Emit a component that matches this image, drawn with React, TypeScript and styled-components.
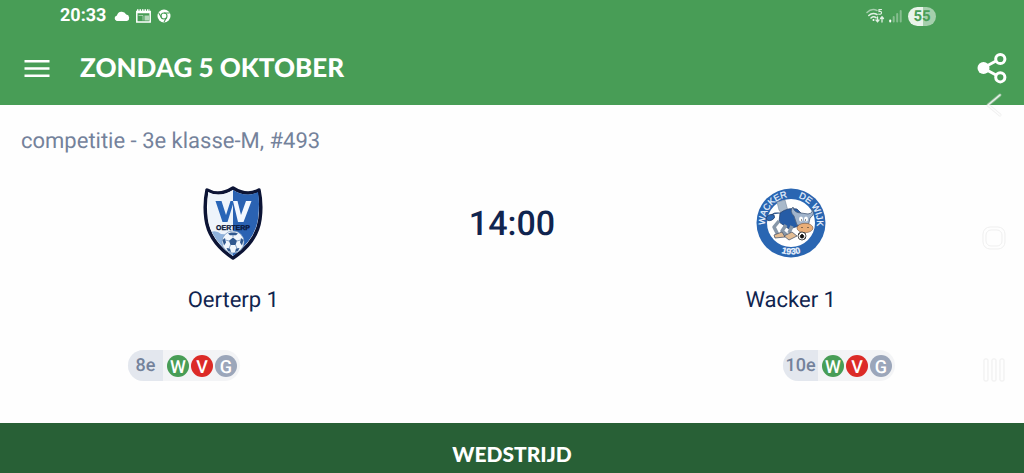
import React from "react";
import styled, { createGlobalStyle } from "styled-components";

const GlobalStyle = createGlobalStyle`
  *, *::before, *::after { box-sizing: border-box; }
  body {
    margin: 0;
    background: #fefefe;
    color: #10244f;
    font-family: Roboto, "Liberation Sans", sans-serif;
    text-rendering: geometricPrecision;
  }
`;

const Page = styled.div`
  min-height: 100vh;
  display: flex;
  flex-direction: column;
`;

const Top = styled.header`
  background: #489d56;
  color: #fff;
`;

const StatusBar = styled.div`
  display: flex;
  align-items: center;
  justify-content: space-between;
  height: 32px;
  padding: 0 88px 0 60px;
`;

const StatusGroup = styled.div<{ $gap: number }>`
  display: flex;
  align-items: center;
  gap: ${(p) => p.$gap}px;
`;

const Clock = styled.span`
  margin-right: 2px;
  font-size: 18px;
  font-weight: 700;
  line-height: 20px;
`;

const Battery = styled.span`
  width: 28px;
  height: 19px;
  margin-left: 2px;
  border-radius: 10px;
  background: linear-gradient(90deg, #e9f4ea 55%, #a5cfac 55%);
  color: #489d56;
  font-size: 15px;
  font-weight: 700;
  line-height: 19px;
  text-align: center;
`;

const TitleBar = styled.div`
  display: flex;
  align-items: center;
  padding: 19px 16px 21px 20px;
`;

const Title = styled.h1`
  flex: 1;
  margin: 0 0 0 26px;
  font: 900 26px/33px Lato, "Liberation Sans", sans-serif;
`;

const IconButton = styled.button`
  display: flex;
  padding: 0;
  border: 0;
  background: none;
  color: inherit;
  cursor: pointer;
`;

const Main = styled.main`
  flex: 1;
  padding-bottom: 41px;
`;

const Competition = styled.p`
  margin: 0;
  padding: 23px 21px 0;
  font-size: 22px;
  line-height: 28px;
  color: #74829b;
`;

const Match = styled.section`
  display: grid;
  grid-template-columns: repeat(3, 1fr);
  padding: 29px 94px 0;
`;

const Team = styled.div`
  display: flex;
  flex-direction: column;
  align-items: center;
  gap: 26px;
`;

const TeamName = styled.h2`
  margin: 0;
  font-size: 22px;
  font-weight: 400;
  line-height: 28px;
`;

const Kickoff = styled.time`
  padding-top: 18px;
  font-size: 34px;
  font-weight: 500;
  line-height: 42px;
  text-align: center;
`;

const Standings = styled.div`
  display: flex;
  justify-content: space-between;
  padding: 35px 129px 0 128px;
`;

const Form = styled.div`
  display: flex;
  align-items: center;
  width: 112px;
  height: 31px;
  border-radius: 16px;
  background: #f3f4f6;
  overflow: hidden;
`;

const Rank = styled.span`
  width: 35px;
  margin-right: 4px;
  background: #e3e7ee;
  color: #74829b;
  font-size: 18px;
  font-weight: 500;
  line-height: 31px;
  text-align: center;
`;

const resultColors = { W: "#489d56", V: "#dc2b27", G: "#9ba6ba" };
type Result = keyof typeof resultColors;

const ResultDot = styled.span<{ $result: Result }>`
  width: 22px;
  height: 22px;
  margin-right: 2px;
  border-radius: 50%;
  background: ${(p) => resultColors[p.$result]};
  color: #fff;
  font-size: 18px;
  font-weight: 500;
  line-height: 26px;
  text-align: center;
  overflow: hidden;
`;

const MatchTab = styled.button`
  width: 100%;
  padding: 19px 0 7px;
  border: 0;
  background: #286036;
  color: #fff;
  font: 900 21px/24px Lato, "Liberation Sans", sans-serif;
  cursor: pointer;
`;

const SystemNav = styled.nav`
  position: fixed;
  top: 92px;
  right: 18px;
  height: 290px;
  display: flex;
  flex-direction: column;
  align-items: center;
  justify-content: space-between;
`;

const CloudIcon = () => (
  <svg width="16" height="12" viewBox="0 0 16 12" fill="#fff" aria-hidden="true">
    <path d="M2.700 11A2.900 2.900 0 0 1 2.900 5.400a5 5 0 0 1 9.300-.8A3.300 3.300 0 0 1 13 11z" />
  </svg>
);

const NewsIcon = () => (
  <svg width="15" height="14" viewBox="0 0 15 14" fill="none" stroke="#fff" aria-hidden="true">
    <path d="M.8 2.500h13.400v10.500H.8z" strokeWidth="1.500" />
    <path d="M1 1.200h13" strokeWidth="2" strokeDasharray="1.500 1" />
    <path d="M1 3.500h13" strokeWidth="1.500" />
    <path d="M8.500 6.500H13v5H8.500z" fill="#fff" fillOpacity=".6" stroke="none" />
    <path d="M2.500 6.500h4.500v5" strokeWidth=".7" strokeOpacity=".7" />
  </svg>
);

const ChromeIcon = () => (
  <svg width="14" height="14" viewBox="0 0 14 14" fill="none" aria-hidden="true">
    <circle cx="7" cy="7" r="6.500" fill="#fff" />
    <circle cx="7" cy="7" r="3" stroke="#489d56" strokeWidth="1.100" />
    <path d="M7 4h5.500M4.400 8.500 1.800 4M9.600 8.500l-2.600 4.500" stroke="#489d56" strokeWidth="1.100" />
  </svg>
);

const WifiIcon = () => (
  <svg width="19" height="16" viewBox="0 0 19 16" fill="none" stroke="#e2f1e4" strokeLinecap="round" aria-hidden="true">
    <path d="M1 4.500Q5.500 0 11 2.500" stroke="#a5cfac" strokeWidth="1.500" />
    <path d="M2.800 7.500Q6.500 4 11 6.500M5 10q2.500-2.300 5-.3" strokeWidth="1.600" />
    <circle cx="7.500" cy="12" r="1" fill="#fff" stroke="none" />
    <path d="M15.500 1.500H13v2q2.500-.6 2.500 1.200T12.800 6.200" strokeWidth="1.200" />
    <path d="M11.500 9v4.500m-1.500-1.500 1.500 1.700 1.500-1.700M16 14V9m-1.500 1.500L16 8.800l1.500 1.700" strokeWidth="1.300" />
  </svg>
);

const SignalIcon = () => (
  <svg width="13" height="14" viewBox="0 0 13 14" stroke="#86be8f" strokeWidth="2" strokeLinecap="round" aria-hidden="true">
    <path d="M1.200 12.500v-1" stroke="#fff" />
    <path d="M4.700 12.500V8M8.200 12.500V5M11.700 12.500V2" />
  </svg>
);

const MenuIcon = () => (
  <svg width="34" height="24" viewBox="0 0 34 24" stroke="#fff" strokeWidth="2.600" aria-hidden="true">
    <path d="M4.500 5.300h25M4.500 12.500h25M4.500 19.700h25" />
  </svg>
);

const ShareIcon = () => (
  <svg width="32" height="32" viewBox="0 0 32 32" fill="none" stroke="#fff" strokeWidth="3" aria-hidden="true">
    <path d="m7 16 13-7M7 16l13 7" />
    <circle cx="7.500" cy="16" r="6" fill="#fff" stroke="none" />
    <circle cx="24.300" cy="7" r="4.600" />
    <circle cx="24.300" cy="25.300" r="4.600" />
  </svg>
);

const OerterpLogo = () => (
  <svg width="60" height="76" viewBox="0 0 60 76" role="img" aria-label="VV Oerterp">
    <defs>
      <clipPath id="shield">
        <path d="M30 5Q17 13 5 7q-2 10 0 27 3 21 25 37 22-16 25-37 2-17 0-27-12 6-25-2z" />
      </clipPath>
    </defs>
    <path d="M30 3Q16 12 4 5q-3 14-1 29 3 23 27 39 24-16 27-39 2-15-1-29-12 7-26-2z" fill="#fff" stroke="#0c1435" strokeWidth="3.500" strokeLinejoin="round" />
    <g clipPath="url(#shield)">
      <path d="M5 5h25v68H5z" fill="#eef4fb" />
      <path d="M5 48q8-4 13 1l12 1v22H5z" fill="#8fb2dc" />
      <path d="M30 0h28v76H30z" fill="#2a62b2" />
    </g>
    <path d="M12.500 16h6l4.500 14 4.500-14H31l-6.500 21h-5z" fill="#2865b7" />
    <path d="M30 16h4.500l3.500 14 5-14h5.500l-8 21h-5.500z" fill="#f3f8ff" />
    <text x="30" y="45" textAnchor="middle" fontFamily="Liberation Sans, sans-serif" fontWeight="700" fontSize="7" fill="#091639" stroke="#091639" strokeWidth=".3">OERTERP</text>
    <circle cx="30" cy="57" r="11" fill="#f2f7fc" stroke="#7696bd" strokeWidth=".7" />
    <path d="m30 52.500 4 3.200-1.500 4.300h-5l-1.500-4.300zM25 48.500l3-1h4l3 1-2 1.800h-6zM19.500 55l2.500-2 1 4.500-2 3zM40.500 55l-2.500-2-1 4.500 2 3zM23.500 63l3.500.5 1 3.500-3-1zM36.500 63l-3.500.5-1 3.500 3-1z" fill="#31598f" />
    <path d="m30 52v-2M34 56l3.500-1M32.500 60l1.500 3.500M27.500 60l-1.500 3.500M26 56l-3.500-1" stroke="#6f90bb" strokeWidth=".8" />
  </svg>
);

const WackerLogo = () => (
  <svg width="70" height="76" viewBox="0 0 70 76" role="img" aria-label="Wacker De Wijk 1930">
    <defs>
      <path id="ring-top" d="M9.500 43a26 26 0 1 1 51 0" />
      <path id="ring-bottom" d="M3.500 38a31.500 31.500 0 0 0 63 0" />
    </defs>
    <circle cx="35" cy="38" r="34.500" fill="#2a66b2" />
    <circle cx="35" cy="38" r="24" fill="#fff" />
    <g fontFamily="Liberation Sans, sans-serif" fontSize="9" fill="#eef5ff" stroke="#eef5ff" strokeWidth=".2">
      <text><textPath href="#ring-top" startOffset="3">WACKER</textPath></text>
      <text textAnchor="end"><textPath href="#ring-top" startOffset="98%">DE WIJK</textPath></text>
      <text textAnchor="middle" fontWeight="700"><textPath href="#ring-bottom" startOffset="50%">1930</textPath></text>
    </g>
    <path d="m21 17 8-2 3 11-6 3-3-4z" fill="#a9b9ca" stroke="#7889a0" strokeWidth=".6" />
    <path d="M24 28q8-6 17-4l6 6-4 11-10 3-10-7z" fill="#265ca6" stroke="#253f6a" strokeWidth=".7" />
    <path d="M24 28q-6-1-9 2M10 33q3-5 8-3 2 3-2 5-5 2-6-2z" fill="#2d67b1" stroke="#253f6a" strokeWidth=".8" />
    <path d="m23 36-5 6 4 8M30 40l-4 6 6 5M36 41l-3 7" fill="none" stroke="#8797a9" strokeWidth="3.500" strokeLinejoin="round" />
    <path d="m18 50 8-3 3 5-10 1zM28 51l8-4 5 4-8 4z" fill="#e3bd94" stroke="#4e596d" strokeWidth=".8" />
    <path d="M38 31q-5-5-1-9 1 6 8 6l7 1q6-1 4-6 4 6-2 10l-2 9-11-2z" fill="#a1b4cc" stroke="#4c607c" strokeWidth=".8" />
    <ellipse cx="49" cy="43" rx="8" ry="4.700" fill="#e9ae78" stroke="#755744" strokeWidth=".6" />
    <ellipse cx="45" cy="34" rx="2" ry="2.600" fill="#fff" />
    <ellipse cx="50" cy="34" rx="2" ry="2.600" fill="#fff" />
    <path d="M45.500 34.500v1M49.500 34.500v1M46 42v1M52 42v1" stroke="#222" />
    <circle cx="46" cy="51" r="4" fill="#fff" stroke="#222" strokeWidth=".8" />
    <path d="m46 49 2 2-1 2h-2l-1-2zM42.500 50l1-2M49.500 52l-1 2M48 47.500l1 1" fill="#111" stroke="#111" strokeWidth=".7" />
  </svg>
);

const BackIcon = () => (
  <svg width="24" height="26" viewBox="0 0 24 26" fill="none" strokeLinecap="round" strokeLinejoin="round" aria-hidden="true">
    <path d="M18 3 6 13l12 10" stroke="#dedede" strokeOpacity=".45" strokeWidth="3" />
    <path d="M18 3 6 13l12 10" stroke="#fff" strokeOpacity=".8" strokeWidth="1.600" />
  </svg>
);

const HomeIcon = () => (
  <svg width="24" height="24" viewBox="0 0 24 24" fill="none" stroke="#efefef" aria-hidden="true">
    <rect x="1" y="1" width="22" height="22" rx="7" />
    <rect x="4" y="4" width="16" height="16" rx="5" />
  </svg>
);

const RecentsIcon = () => (
  <svg width="24" height="24" viewBox="0 0 24 24" fill="none" stroke="#ededed" aria-hidden="true">
    <rect x="2" y="1" width="4" height="22" rx="1" />
    <rect x="10" y="1" width="4" height="22" rx="1" />
    <rect x="18" y="1" width="4" height="22" rx="1" />
  </svg>
);

function RecentForm({ rank, results }: { rank: string; results: Result[] }) {
  return (
    <Form>
      <Rank>{rank}</Rank>
      {results.map((result, i) => (
        <ResultDot key={i} $result={result}>{result}</ResultDot>
      ))}
    </Form>
  );
}

export default function App() {
  return (
    <Page>
      <GlobalStyle />
      <Top>
        <StatusBar>
          <StatusGroup $gap={6}>
            <Clock>20:33</Clock>
            <CloudIcon />
            <NewsIcon />
            <ChromeIcon />
          </StatusGroup>
          <StatusGroup $gap={4}>
            <WifiIcon />
            <SignalIcon />
            <Battery>55</Battery>
          </StatusGroup>
        </StatusBar>
        <TitleBar>
          <IconButton aria-label="Menu"><MenuIcon /></IconButton>
          <Title>ZONDAG 5 OKTOBER</Title>
          <IconButton aria-label="Delen"><ShareIcon /></IconButton>
        </TitleBar>
      </Top>
      <Main>
        <Competition>competitie - 3e klasse-M, #493</Competition>
        <Match>
          <Team>
            <OerterpLogo />
            <TeamName>Oerterp 1</TeamName>
          </Team>
          <Kickoff>14:00</Kickoff>
          <Team>
            <WackerLogo />
            <TeamName>Wacker 1</TeamName>
          </Team>
        </Match>
        <Standings>
          <RecentForm rank="8e" results={["W", "V", "G"]} />
          <RecentForm rank="10e" results={["W", "V", "G"]} />
        </Standings>
      </Main>
      <MatchTab>WEDSTRIJD</MatchTab>
      <SystemNav aria-label="Systeemnavigatie">
        <IconButton aria-label="Terug"><BackIcon /></IconButton>
        <IconButton aria-label="Startscherm"><HomeIcon /></IconButton>
        <IconButton aria-label="Recente apps"><RecentsIcon /></IconButton>
      </SystemNav>
    </Page>
  );
}
